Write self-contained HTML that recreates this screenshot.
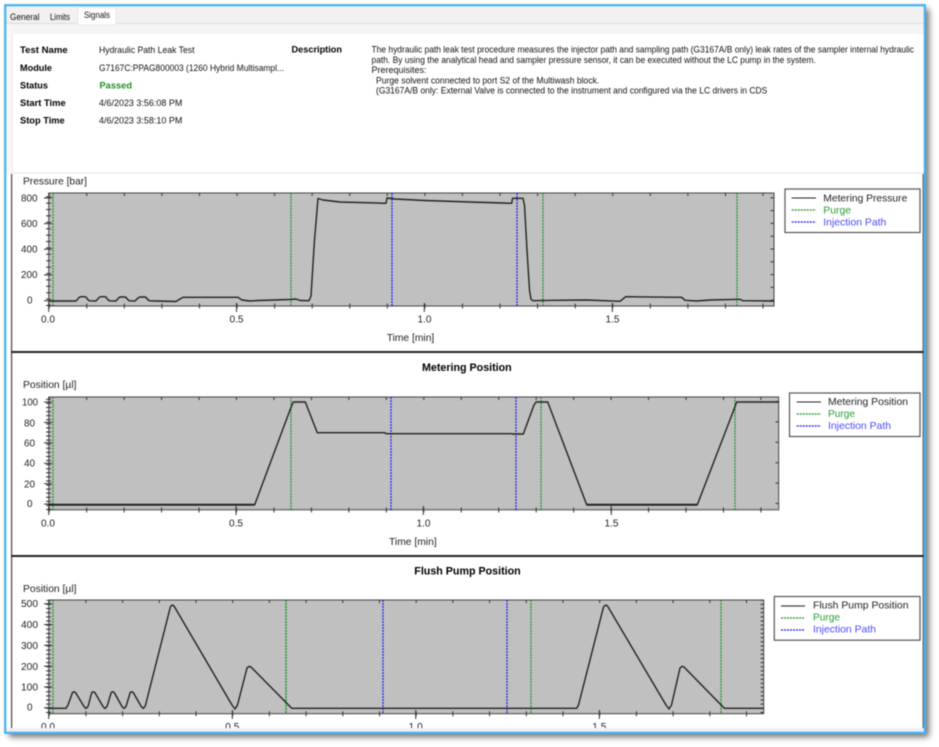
<!DOCTYPE html>
<html><head><meta charset="utf-8"><title>Signals</title>
<style>
html,body{margin:0;padding:0;width:939px;height:747px;background:#fff;overflow:hidden}
svg{position:absolute;left:0;top:0;filter:blur(.42px)}
#sh{position:absolute;left:5px;top:5px;width:920px;height:728px;box-shadow:4px 4px 6px rgba(0,0,0,.55)}
text{font-family:"Liberation Sans",sans-serif;font-size:9px;fill:#111}
.b{font-weight:bold;fill:#000}
.a{font-size:10px;fill:#222}
.l{font-size:10.5px;fill:#222}
.g{fill:#2a9d35}.u{fill:#4a4aff}
.t{font-size:11px;font-weight:bold;fill:#000}
.c{fill:none;stroke:#222;stroke-width:1.4;stroke-linejoin:round}
.gr{stroke:#1f8f2a;stroke-width:1.2;stroke-dasharray:2 1}
.bl{stroke:#1a1af0;stroke-width:1.2;stroke-dasharray:2 1}
.k{stroke:#333;fill:none}
</style></head><body>
<div id="sh"></div>
<svg width="939" height="747" viewBox="0 0 939 747" xmlns="http://www.w3.org/2000/svg">
<rect x="5" y="5" width="920" height="728" fill="#fff"/>
<!-- tab strip -->
<rect x="6" y="6" width="918" height="17" fill="#f1f1f1"/>
<rect x="6" y="23" width="918" height="1" fill="#dcdcdc"/>
<rect x="6" y="24" width="918" height="10" fill="#f5f5f6"/>
<rect x="6" y="24" width="6" height="150" fill="#f7f7f7"/>
<rect x="78" y="8" width="38" height="17" fill="#fff" stroke="#e4e4e4" stroke-width=".7"/>
<text x="10" y="20" textLength="29.5" lengthAdjust="spacingAndGlyphs">General</text>
<text x="50" y="20" textLength="20" lengthAdjust="spacingAndGlyphs">Limits</text>
<text x="84" y="18" textLength="26" lengthAdjust="spacingAndGlyphs">Signals</text>
<!-- info panel -->
<rect x="12" y="34" width="912" height="138" fill="#fff"/>
<rect x="12" y="172" width="912" height="2" fill="#eff0f4"/>
<rect x="12" y="34" width="1" height="138" fill="#ececec"/>
<text class="b" x="20" y="53" textLength="47.7" lengthAdjust="spacingAndGlyphs">Test Name</text>
<text class="b" x="20" y="71" textLength="32" lengthAdjust="spacingAndGlyphs">Module</text>
<text class="b" x="20" y="88.5" textLength="28" lengthAdjust="spacingAndGlyphs">Status</text>
<text class="b" x="20" y="106" textLength="45.7" lengthAdjust="spacingAndGlyphs">Start Time</text>
<text class="b" x="20" y="123.5" textLength="44.7" lengthAdjust="spacingAndGlyphs">Stop Time</text>
<text x="99" y="53" textLength="95.5" lengthAdjust="spacingAndGlyphs">Hydraulic Path Leak Test</text>
<text x="99" y="71" textLength="185" lengthAdjust="spacingAndGlyphs">G7167C:PPAG800003 (1260 Hybrid Multisampl...</text>
<text x="99.5" y="88.5" textLength="32.5" lengthAdjust="spacingAndGlyphs" style="font-weight:bold;fill:#1d8f22">Passed</text>
<text x="99" y="106" textLength="83.3" lengthAdjust="spacingAndGlyphs">4/6/2023 3:56:08 PM</text>
<text x="99" y="123.5" textLength="83.3" lengthAdjust="spacingAndGlyphs">4/6/2023 3:58:10 PM</text>
<text class="b" x="291.5" y="52.5" textLength="50.5" lengthAdjust="spacingAndGlyphs">Description</text>
<text x="371.5" y="52.5" textLength="542.5" lengthAdjust="spacingAndGlyphs">The hydraulic path leak test procedure measures the injector path and sampling path (G3167A/B only) leak rates of the sampler internal hydraulic</text>
<text x="371.5" y="63" textLength="444.2" lengthAdjust="spacingAndGlyphs">path. By using the analytical head and sampler pressure sensor, it can be executed without the LC pump in the system.</text>
<text x="371.5" y="73">Prerequisites:</text>
<text x="376" y="83.5" textLength="223.3" lengthAdjust="spacingAndGlyphs">Purge solvent connected to port S2 of the Multiwash block.</text>
<text x="376" y="93.5" textLength="391.3" lengthAdjust="spacingAndGlyphs">(G3167A/B only: External Valve is connected to the instrument and configured via the LC drivers in CDS</text>

<!-- structural lines -->
<rect x="11" y="174" width="1.2" height="554" fill="#444"/>
<rect x="922.6" y="174" width="1.2" height="554" fill="#555"/>
<rect x="11" y="351" width="913" height="2" fill="#222"/>
<rect x="11" y="555" width="913" height="2" fill="#222"/>

<!-- CHART 1 -->
<text class="l" x="23" y="184.5" textLength="64" lengthAdjust="spacingAndGlyphs">Pressure [bar]</text>
<rect x="48.7" y="193" width="725.3" height="113" fill="#c0c0c0" stroke="#444" stroke-width="1"/>
<g class="k">
<path d="M44 198H52M44 223.6H52M44 249.3H52M44 275H52M44 300.7H52"/>
<line x1="48.5" y1="306" x2="48.5" y2="193" stroke-width="5" stroke-dasharray="1 5.4"/>
<line x1="772" y1="300.7" x2="772" y2="193" stroke-width="3" stroke-dasharray="1 11.8"/>
<line x1="48.7" y1="306" x2="774" y2="306" stroke-width="5" stroke-dasharray="1 36.57"/>
<line x1="48.7" y1="194.5" x2="774" y2="194.5" stroke-width="3" stroke-dasharray="1 36.57"/>
<path d="M48.7 303V312M236.5 303V312M424.3 303V312M612.3 303V312"/>
</g>
<line class="gr" x1="53" y1="193" x2="53" y2="306"/>
<line class="gr" x1="291" y1="193" x2="291" y2="306"/>
<line class="gr" x1="543" y1="193" x2="543" y2="306"/>
<line class="gr" x1="737" y1="193" x2="737" y2="306"/>
<line class="bl" x1="392" y1="193" x2="392" y2="306"/>
<line class="bl" x1="517" y1="193" x2="517" y2="306"/>
<path class="c" d="M48.7 301L76 301C78 299 79 296.7 81 296.700L85 296.700C87 296.700 87 300.500 90 300.800L96 301C98 299 99 296.700 101 296.700L105 296.700C107 296.700 107 300.500 110 300.800L116 301C118 299 118.500 297 120.500 297L125 297C127 297 127 300.500 130 300.800L135 301C137 299 138.500 297 140.500 297L145 297C147 297 147 300.500 150 300.800L157 301L176 301.500L180 299L183 297.300L238 297.300L242 300L250 301L258 300.500L290 299.500L296 299L300 300.500L309 300.700L311 296L312.500 272L314.500 240L318 198.500L323 200L340 202L386 203.300L387 198L395 199L425 200.500L470 202L511.700 203.300L512.500 198.300L523 198.300L524.500 205L527 250L529.500 290L531 299.300L533 300.700L553 300.300L586.700 300L620 301.300L625.700 296.700L681.700 297.300L685 300.300L696.700 301L710 300L740 299.300L743 300.700L774 301"/>
<text class="a" x="21" y="201.500" textLength="16.500" lengthAdjust="spacingAndGlyphs">800</text>
<text class="a" x="21" y="227" textLength="16.500" lengthAdjust="spacingAndGlyphs">600</text>
<text class="a" x="21" y="252.500" textLength="16.500" lengthAdjust="spacingAndGlyphs">400</text>
<text class="a" x="21" y="278" textLength="16.500" lengthAdjust="spacingAndGlyphs">200</text>
<text class="a" x="27" y="303.500" textLength="5.500" lengthAdjust="spacingAndGlyphs">0</text>
<text class="a" x="41" y="322.500" textLength="14" lengthAdjust="spacingAndGlyphs">0.0</text>
<text class="a" x="229.500" y="322.500" textLength="14" lengthAdjust="spacingAndGlyphs">0.5</text>
<text class="a" x="417.500" y="322.500" textLength="14" lengthAdjust="spacingAndGlyphs">1.0</text>
<text class="a" x="605.500" y="322.500" textLength="14" lengthAdjust="spacingAndGlyphs">1.5</text>
<text class="l" x="386.700" y="341" textLength="47.600" lengthAdjust="spacingAndGlyphs">Time [min]</text>
<rect x="785" y="189" width="135" height="43.500" fill="#fff" stroke="#555" stroke-width="1.200"/>
<line x1="791.700" y1="198" x2="816" y2="198" stroke="#222"/>
<line class="gr" x1="791.700" y1="210" x2="816" y2="210"/>
<line class="bl" x1="791.700" y1="222" x2="816" y2="222"/>
<text class="l" x="823.300" y="201.500" textLength="84" lengthAdjust="spacingAndGlyphs">Metering Pressure</text>
<text class="l g" x="823.300" y="213.500" textLength="27.700" lengthAdjust="spacingAndGlyphs">Purge</text>
<text class="l u" x="823.300" y="225.500" textLength="63" lengthAdjust="spacingAndGlyphs">Injection Path</text>

<!-- CHART 2 -->
<text class="t" x="422" y="371" textLength="89.700" lengthAdjust="spacingAndGlyphs">Metering Position</text>
<text class="l" x="23" y="388" textLength="53.500" lengthAdjust="spacingAndGlyphs">Position [µl]</text>
<rect x="48.700" y="397" width="730" height="113" fill="#c0c0c0" stroke="#444" stroke-width="1"/>
<line x1="48.700" y1="509.500" x2="778.700" y2="509.500" stroke="#888" stroke-width="1.500"/>
<g class="k">
<path d="M44 402H52M44 422.400H52M44 442.800H52M44 463.200H52M44 483.600H52M44 504H52"/>
<line x1="48.500" y1="510" x2="48.500" y2="397" stroke-width="5" stroke-dasharray="1 3.080"/>
<line x1="777" y1="504" x2="777" y2="397" stroke-width="3" stroke-dasharray="1 19.400"/>
<line x1="48.700" y1="510" x2="778.700" y2="510" stroke-width="5" stroke-dasharray="1 36.460"/>
<line x1="48.700" y1="398.500" x2="778.700" y2="398.500" stroke-width="3" stroke-dasharray="1 36.460"/>
<path d="M48.700 506V515M236 506V515M423.300 506V515M611.300 506V515"/>
</g>
<line class="gr" x1="53" y1="397" x2="53" y2="510"/>
<line class="gr" x1="291" y1="397" x2="291" y2="510"/>
<line class="gr" x1="541" y1="397" x2="541" y2="510"/>
<line class="gr" x1="735" y1="397" x2="735" y2="510"/>
<line class="bl" x1="391" y1="397" x2="391" y2="510"/>
<line class="bl" x1="516" y1="397" x2="516" y2="510"/>
<path class="c" d="M48.700 504.700H254.700L290 410L293.300 402H305.300L317.300 432.700H385L386 433.700H511.700L512 434H523.300L534 405L536 402H547.700L586.700 504.700H697.300L733 412L736.700 402H778.700"/>
<path d="M48.700 504.700H254.700M586.700 504.700H697.300" stroke="#222" stroke-width="2" fill="none"/>
<text class="a" x="22" y="405.500" textLength="16" lengthAdjust="spacingAndGlyphs">100</text>
<text class="a" x="24" y="426.500" textLength="11" lengthAdjust="spacingAndGlyphs">80</text>
<text class="a" x="24" y="446.500" textLength="11" lengthAdjust="spacingAndGlyphs">60</text>
<text class="a" x="24" y="466.500" textLength="11" lengthAdjust="spacingAndGlyphs">40</text>
<text class="a" x="24" y="487.500" textLength="11" lengthAdjust="spacingAndGlyphs">20</text>
<text class="a" x="27" y="507" textLength="5.500" lengthAdjust="spacingAndGlyphs">0</text>
<text class="a" x="41" y="526.300" textLength="14" lengthAdjust="spacingAndGlyphs">0.0</text>
<text class="a" x="229" y="526.300" textLength="14" lengthAdjust="spacingAndGlyphs">0.5</text>
<text class="a" x="416.500" y="526.300" textLength="14" lengthAdjust="spacingAndGlyphs">1.0</text>
<text class="a" x="604.500" y="526.300" textLength="14" lengthAdjust="spacingAndGlyphs">1.5</text>
<text class="l" x="389" y="545" textLength="47.700" lengthAdjust="spacingAndGlyphs">Time [min]</text>
<rect x="789.500" y="393" width="130.500" height="43.500" fill="#fff" stroke="#555" stroke-width="1.200"/>
<line x1="796.700" y1="402" x2="821" y2="402" stroke="#222"/>
<line class="gr" x1="796.700" y1="414" x2="821" y2="414"/>
<line class="bl" x1="796.700" y1="426" x2="821" y2="426"/>
<text class="l" x="828" y="405" textLength="80" lengthAdjust="spacingAndGlyphs">Metering Position</text>
<text class="l g" x="828" y="417" textLength="27" lengthAdjust="spacingAndGlyphs">Purge</text>
<text class="l u" x="828" y="429" textLength="63" lengthAdjust="spacingAndGlyphs">Injection Path</text>

<!-- CHART 3 -->
<text class="t" x="414.300" y="574.700" textLength="106.400" lengthAdjust="spacingAndGlyphs">Flush Pump Position</text>
<text class="l" x="23" y="592" textLength="53.500" lengthAdjust="spacingAndGlyphs">Position [µl]</text>
<rect x="48.700" y="600" width="715" height="113.700" fill="#c0c0c0" stroke="#444" stroke-width="1"/>
<g class="k">
<path d="M44 603.700H52M44 624.500H52M44 645.300H52M44 666.100H52M44 686.900H52M44 707.700H52"/>
<line x1="48.500" y1="713" x2="48.500" y2="600" stroke-width="5" stroke-dasharray="1 3.160"/>
<line x1="762" y1="713" x2="762" y2="600" stroke-width="3" stroke-dasharray="1 3.160"/>
<line x1="48.700" y1="713.700" x2="763.700" y2="713.700" stroke-width="5" stroke-dasharray="1 35.700"/>
<line x1="48.700" y1="601.500" x2="763.700" y2="601.500" stroke-width="3" stroke-dasharray="1 35.700"/>
<path d="M48.700 710V719M232.300 710V719M415.700 710V719M599.300 710V719"/>
</g>
<line class="gr" x1="53" y1="600" x2="53" y2="713.700"/>
<line class="gr" x1="286" y1="600" x2="286" y2="713.700" style="stroke-width:1.500"/>
<line class="gr" x1="531" y1="600" x2="531" y2="713.700"/>
<line class="gr" x1="721" y1="600" x2="721" y2="713.700"/>
<line class="bl" x1="383" y1="600" x2="383" y2="713.700"/>
<line class="bl" x1="507" y1="600" x2="507" y2="713.700"/>
<path class="c" d="M48.700 708.300H66L68 705L72.500 692.500L74 691.700L75.500 692.500L84 706.500L86 708.500L88 706.500L91.800 692.500L93.300 691.700L94.800 692.500L103 706.500L105 708.500L107 706.500L111.200 692.500L112.700 691.700L114.200 692.500L122 706.500L124 708.500L126 706.500L130.200 692.500L131.700 691.700L133.200 692.500L141.300 706.500L143.300 708.500L145.300 706L170.500 606.500L172.300 605L174 606L232 705L235 709L237.500 705L247 668L249.300 666.300L251 667L291.700 708.300H576.700L578.500 705L603.500 607L605.700 605L607.500 606L666 705L669 709L671.500 705L680 668L682 666.300L684 667L724.300 708.300H763.700"/>
<text class="a" x="21" y="607" textLength="17" lengthAdjust="spacingAndGlyphs">500</text>
<text class="a" x="21" y="628" textLength="17" lengthAdjust="spacingAndGlyphs">400</text>
<text class="a" x="21" y="649" textLength="17" lengthAdjust="spacingAndGlyphs">300</text>
<text class="a" x="21" y="670" textLength="17" lengthAdjust="spacingAndGlyphs">200</text>
<text class="a" x="21" y="690.500" textLength="17" lengthAdjust="spacingAndGlyphs">100</text>
<text class="a" x="27" y="710.500" textLength="5.500" lengthAdjust="spacingAndGlyphs">0</text>
<text class="a" x="41" y="730" textLength="14" lengthAdjust="spacingAndGlyphs">0.0</text>
<text class="a" x="225.300" y="730" textLength="14" lengthAdjust="spacingAndGlyphs">0.5</text>
<text class="a" x="408.700" y="730" textLength="14" lengthAdjust="spacingAndGlyphs">1.0</text>
<text class="a" x="592.300" y="730" textLength="14" lengthAdjust="spacingAndGlyphs">1.5</text>
<rect x="774.300" y="596.500" width="145.700" height="43.700" fill="#fff" stroke="#555" stroke-width="1.200"/>
<line x1="781" y1="606" x2="805" y2="606" stroke="#444" stroke-width="1.300"/>
<line class="gr" x1="781" y1="618" x2="805" y2="618"/>
<line class="bl" x1="781" y1="630" x2="805" y2="630"/>
<text class="l" x="813" y="608.500" textLength="95.500" lengthAdjust="spacingAndGlyphs">Flush Pump Position</text>
<text class="l g" x="813" y="620.500" textLength="27" lengthAdjust="spacingAndGlyphs">Purge</text>
<text class="l u" x="813" y="632.500" textLength="63" lengthAdjust="spacingAndGlyphs">Injection Path</text>

<!-- bottom strip + frame -->
<rect x="6" y="728" width="918" height="4" fill="#eef0f6"/>
<rect x="5.200" y="5.200" width="919.600" height="727.600" fill="none" stroke="#45b2f4" stroke-width="2.200"/>
</svg>
</body></html>
